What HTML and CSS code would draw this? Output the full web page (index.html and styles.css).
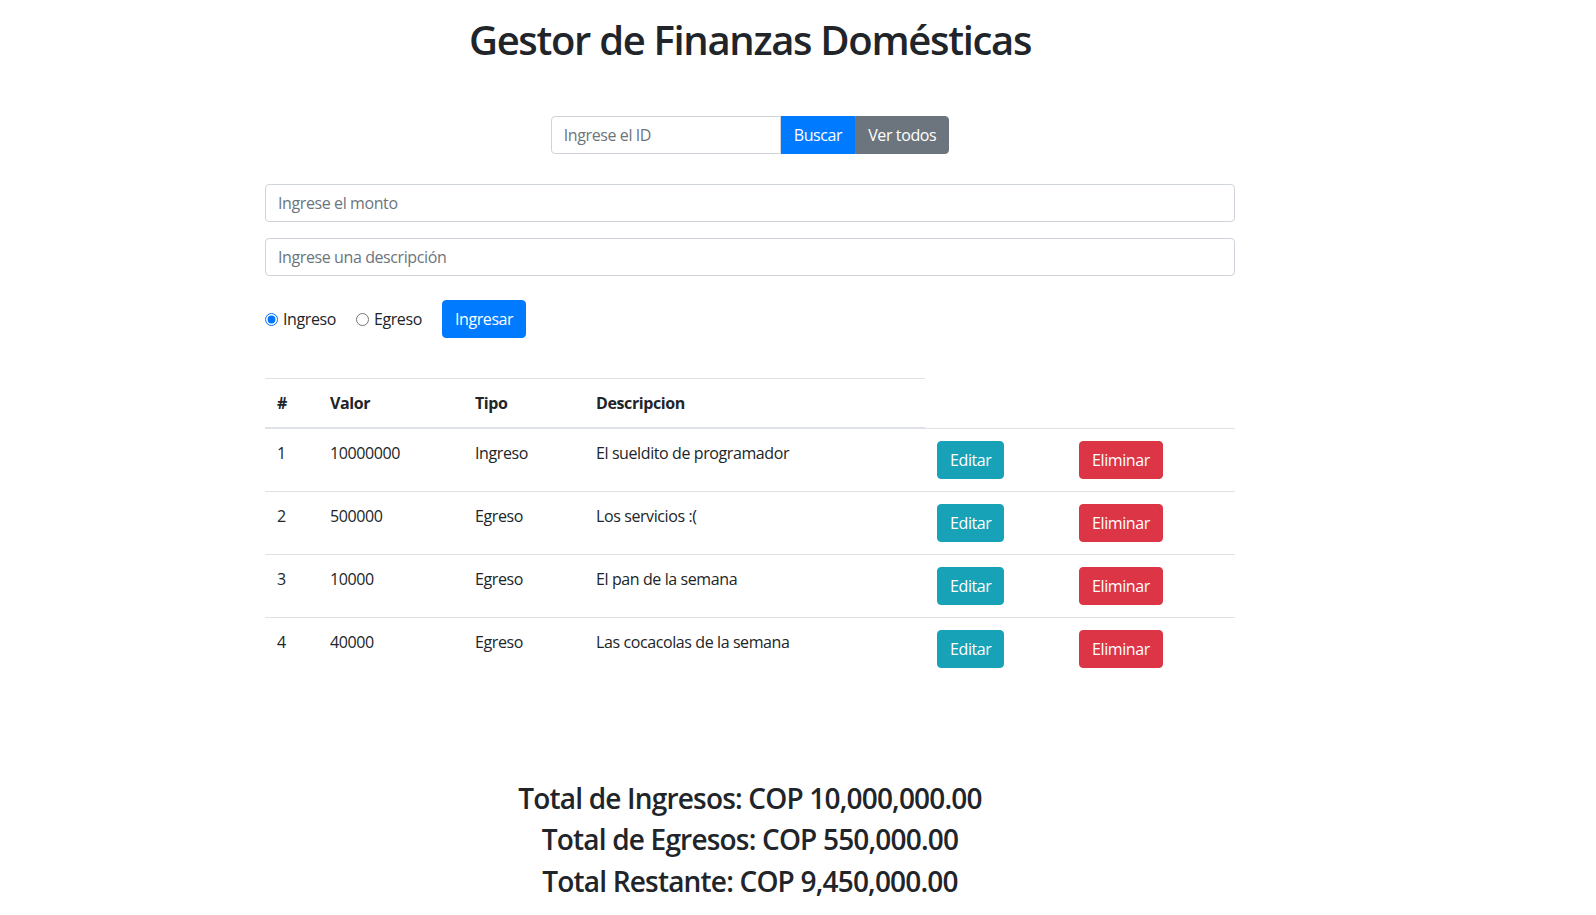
FILE: index.html
```html
<!DOCTYPE html>
<html lang="es">
<head>
<meta charset="utf-8">
<title>Gestor de Finanzas Domésticas</title>
<link rel="stylesheet" href="styles.css">
</head>
<body>
<div class="app">
  <div class="container">
    <h1 class="title">Gestor de Finanzas Domésticas</h1>

    <div class="search">
      <input class="form-control search-input" type="text" placeholder="Ingrese el ID">
      <button class="btn btn-primary btn-mid" type="button">Buscar</button>
      <button class="btn btn-secondary btn-end" type="button">Ver todos</button>
    </div>

    <form class="entry">
      <input class="form-control field" type="text" placeholder="Ingrese el monto">
      <input class="form-control field" type="text" placeholder="Ingrese una descripción">
      <div class="type-row">
        <label class="check"><input class="radio" type="radio" name="tipo" checked><span>Ingreso</span></label>
        <label class="check"><input class="radio" type="radio" name="tipo"><span>Egreso</span></label>
        <button class="btn btn-primary" type="button">Ingresar</button>
      </div>
    </form>

    <table class="table">
      <colgroup>
        <col class="c-num"><col class="c-val"><col class="c-tipo"><col class="c-desc"><col class="c-edit"><col class="c-del">
      </colgroup>
      <thead>
        <tr><th>#</th><th>Valor</th><th>Tipo</th><th>Descripcion</th></tr>
      </thead>
      <tbody>
        <tr><td>1</td><td>10000000</td><td>Ingreso</td><td>El sueldito de programador</td><td><button class="btn btn-info" type="button">Editar</button></td><td><button class="btn btn-danger" type="button">Eliminar</button></td></tr>
        <tr><td>2</td><td>500000</td><td>Egreso</td><td>Los servicios :(</td><td><button class="btn btn-info" type="button">Editar</button></td><td><button class="btn btn-danger" type="button">Eliminar</button></td></tr>
        <tr><td>3</td><td>10000</td><td>Egreso</td><td>El pan de la semana</td><td><button class="btn btn-info" type="button">Editar</button></td><td><button class="btn btn-danger" type="button">Eliminar</button></td></tr>
        <tr><td>4</td><td>40000</td><td>Egreso</td><td>Las cocacolas de la semana</td><td><button class="btn btn-info" type="button">Editar</button></td><td><button class="btn btn-danger" type="button">Eliminar</button></td></tr>
      </tbody>
    </table>

    <div class="totals">
      <h3 class="total">Total de Ingresos: COP 10,000,000.00</h3>
      <h3 class="total">Total de Egresos: COP 550,000.00</h3>
      <h3 class="total">Total Restante: COP 9,450,000.00</h3>
    </div>
  </div>
</div>
</body>
</html>
```

FILE: styles.css
```css
* { box-sizing: border-box; }

html, body {
  margin: 0;
  background: #fff;
}

body {
  font-family: "Open Sans", "Noto Sans", sans-serif;
  font-size: 16px;
  line-height: 1.5;
  letter-spacing: -0.025em;
  color: #212529;
}

.app {
  width: 1500px;
}

.container {
  width: 970px;
  margin: 0 auto;
}

.title {
  margin: 16px 0 52px;
  font-size: 40px;
  line-height: 1.2;
  font-weight: 600;
  letter-spacing: -0.033em;
  text-align: center;
}

.search {
  display: flex;
  justify-content: center;
  height: 38px;
}

.form-control {
  display: block;
  height: 38px;
  padding: 6px 12px;
  font-family: inherit;
  font-size: 16px;
  line-height: 1.5;
  letter-spacing: -0.025em;
  color: #495057;
  background: #fff;
  border: 1px solid #ced4da;
  border-radius: 4px;
  outline: none;
}

.form-control::placeholder {
  color: #6c757d;
  opacity: 1;
}

.search-input {
  width: 230px;
  border-radius: 4px 0 0 4px;
}

.btn {
  display: inline-block;
  height: 38px;
  padding: 6px 12px;
  font-family: inherit;
  font-size: 16px;
  line-height: 1.5;
  letter-spacing: -0.025em;
  font-weight: 400;
  color: #fff;
  border: 1px solid transparent;
  border-radius: 4px;
  cursor: pointer;
  white-space: nowrap;
}

.btn-primary { background: #007bff; border-color: #007bff; }
.btn-secondary { background: #6c757d; border-color: #6c757d; }
.btn-info { background: #17a2b8; border-color: #17a2b8; }
.btn-danger { background: #dc3545; border-color: #dc3545; }

.btn-mid { border-radius: 0; }
.btn-end { border-radius: 0 4px 4px 0; }

.entry {
  margin-top: 30px;
  display: flex;
  flex-direction: column;
}

.field {
  width: 100%;
  margin-bottom: 16px;
}

.type-row {
  display: flex;
  align-items: center;
  margin-top: 8px;
}

.check {
  display: inline-flex;
  align-items: center;
  margin-right: 20px;
}

.radio {
  width: 13px;
  height: 13px;
  margin: 0 5px 0 0;
}

.table {
  width: 970px;
  margin-top: 40px;
  border-collapse: collapse;
  table-layout: fixed;
}

.c-num { width: 53px; }
.c-val { width: 145px; }
.c-tipo { width: 121px; }
.c-desc { width: 341px; }
.c-edit { width: 142px; }
.c-del { width: 168px; }

.table th,
.table td {
  padding: 12px;
  text-align: left;
  vertical-align: top;
  border-top: 1px solid #dee2e6;
}

.table th {
  font-weight: 700;
  vertical-align: bottom;
  border-bottom: 2px solid #dee2e6;
}

.totals {
  margin-top: 102px;
  text-align: center;
}

.total {
  margin: 0 0 8px;
  font-size: 28px;
  line-height: 1.2;
  font-weight: 600;
  letter-spacing: -0.029em;
}
```
